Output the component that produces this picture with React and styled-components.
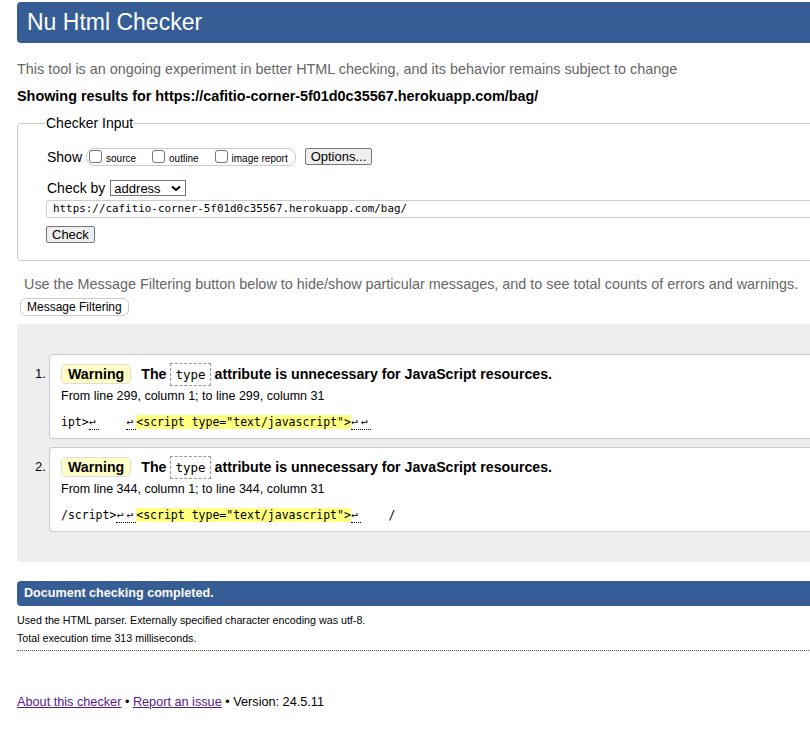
import styled, { createGlobalStyle } from "styled-components";

const Global = createGlobalStyle`
  html, body {
    margin: 0;
    padding: 0;
    overflow: hidden;
    background: #fff;
  }
  body {
    font-family: "Liberation Sans", Arial, sans-serif;
    color: #000;
  }
`;

const Page = styled.div`
  width: 1000px;
  padding: 2px 0 40px 17px;
`;

const Header = styled.h1`
  margin: 0;
  height: 41px;
  line-height: 41px;
  background: #365d95;
  color: #fff;
  border-radius: 4px;
  padding-left: 10px;
  font-size: 23px;
  font-weight: 400;
`;

const Intro = styled.p`
  margin: 18px 0 0;
  font-size: 14.4px;
  line-height: 17px;
  color: #666;
`;

const Showing = styled.p`
  margin: 10px 0 0;
  font-size: 14.4px;
  line-height: 17px;
  font-weight: 700;
`;

const Fieldset = styled.fieldset`
  margin: 10px 0 0;
  border: 1px solid #ccc;
  border-radius: 4px;
  padding: 16px 0 17px 29px;
  height: 146px;
  box-sizing: border-box;
`;

const Legend = styled.legend`
  font-size: 14px;
  padding: 0 1px;
  margin-left: -2px;
`;

const Row = styled.div`
  display: flex;
  align-items: center;
  font-size: 14px;
  margin-top: ${(p) => p.$top || 0}px;
`;

const Pill = styled.span`
  display: inline-flex;
  align-items: center;
  height: 16px;
  border: 1px solid #ccc;
  border-radius: 8px;
  padding: 0 7px 0 2px;
  margin-left: 4px;
  font-size: 10px;
  margin-top: 1px;
`;

const Opt = styled.label`
  display: inline-flex;
  align-items: center;
  margin-right: ${(p) => p.$gap || 0}px;
  padding-top: 2px;
`;

const Box = styled.span`
  display: inline-block;
  width: 11px;
  height: 11px;
  border: 1px solid #767676;
  border-radius: 3px;
  margin-right: 4px;
  margin-top: -4px;
  background: #fff;
`;

const Btn = styled.button`
  font-family: "Liberation Sans", Arial, sans-serif;
  font-size: 13px;
  line-height: 14px;
  background: #efefef;
  border: 1px solid #767676;
  border-radius: 2px;
  padding: 0 5px;
  height: 17px;
  color: #000;
  margin-left: ${(p) => p.$left || 0}px;
`;

const Select = styled.span`
  display: inline-flex;
  align-items: center;
  justify-content: space-between;
  width: 76px;
  height: 16px;
  box-sizing: border-box;
  border: 1px solid #767676;
  margin-left: 5px;
  padding: 0 4px 0 3px;
  font-size: 13px;
`;

const UrlInput = styled.div`
  margin: 4px 0 0 -1px;
  height: 18px;
  box-sizing: border-box;
  border: 1px solid #ccc;
  border-radius: 4px 0 0 4px;
  border-right: none;
  font-family: "DejaVu Sans Mono", monospace;
  font-size: 10.9px;
  line-height: 16px;
  padding-left: 6px;
`;

const Note = styled.p`
  margin: 15px 0 0 7px;
  font-size: 14.4px;
  line-height: 17px;
  color: #666;
`;

const PillBtn = styled.button`
  margin: 5px 0 0 3px;
  font-family: "Liberation Sans", Arial, sans-serif;
  font-size: 12px;
  height: 18px;
  padding: 0 6px;
  background: #fff;
  border: 1px solid #ccc;
  border-radius: 6px;
  color: #000;
`;

const Results = styled.ol`
  margin: 8px 0 0;
  background: #eee;
  border-radius: 4px 0 0 4px;
  padding: 30px 0 30px 32px;
  list-style: none;
  counter-reset: msg;
`;

const Item = styled.li`
  position: relative;
  counter-increment: msg;
  background: #fff;
  border: 1px solid #ccc;
  border-right: none;
  border-radius: 4px 0 0 4px;
  height: 85px;
  box-sizing: border-box;
  padding: 8px 0 0 11px;
  & + & {
    margin-top: 8px;
  }
  &::before {
    content: counter(msg) ".";
    position: absolute;
    left: -15px;
    top: 11px;
    font-size: 13px;
  }
`;

const Title = styled.p`
  margin: 0;
  display: flex;
  align-items: center;
  font-size: 14.2px;
  font-weight: 700;
  height: 22px;
`;

const Badge = styled.span`
  display: inline-block;
  background: #ffffc6;
  border: 1px solid #ddd;
  border-radius: 5px;
  padding: 0 6px;
  height: 18px;
  line-height: 18px;
  margin-right: 10px;
`;

const Code = styled.code`
  display: inline-block;
  font-family: "DejaVu Sans Mono", monospace;
  font-weight: 400;
  font-size: 12.5px;
  border: 1px dashed #999;
  padding: 0 4px;
  height: 21px;
  line-height: 21px;
  margin: 0 4px;
`;

const Location = styled.p`
  margin: 3px 0 0;
  font-size: 12.5px;
  line-height: 16px;
`;

const Extract = styled.pre`
  margin: 10px 0 0;
  font-family: "DejaVu Sans Mono", monospace;
  font-size: 11.5px;
  line-height: 17px;
  white-space: pre;
`;

const Ws = styled.span`
  border-bottom: 1px dotted #000;
  letter-spacing: 3px;
`;

const Mark = styled.mark`
  background: #ffff80;
  color: #000;
`;

const Done = styled.p`
  margin: 19px 0 0;
  height: 25px;
  line-height: 25px;
  background: #365d95;
  color: #fff;
  font-weight: 700;
  font-size: 12.6px;
  padding-left: 7px;
  border-radius: 4px 0 0 4px;
`;

const Details = styled.div`
  margin-top: 5px;
  font-size: 10.7px;
  line-height: 18px;
  border-bottom: 1px dotted #666;
  padding-bottom: 3px;
`;

const Footer = styled.p`
  margin: 43px 0 0;
  font-size: 12.7px;
  line-height: 17px;
  a {
    color: #551a8b;
    text-decoration: underline;
  }
`;

// parts: [kind, text] — "t" plain, "w" marked whitespace, "m" highlighted source
function Message({ line, parts }) {
  return (
    <Item>
      <Title>
        <Badge>Warning</Badge>
        The<Code>type</Code>attribute is unnecessary for JavaScript resources.
      </Title>
      <Location>
        From line {line}, column 1; to line {line}, column 31
      </Location>
      <Extract>
        {parts.map(([kind, text], i) =>
          kind === "w" ? (
            <Ws key={i}>{text}</Ws>
          ) : kind === "m" ? (
            <Mark key={i}>{text}</Mark>
          ) : (
            <span key={i}>{text}</span>
          )
        )}
      </Extract>
    </Item>
  );
}

const tag = '<script type="text/javascript">';

export default function App() {
  return (
    <Page>
      <Global />
      <Header>Nu Html Checker</Header>
      <Intro>
        This tool is an ongoing experiment in better HTML checking, and its
        behavior remains subject to change
      </Intro>
      <Showing>
        Showing results for https://cafitio-corner-5f01d0c35567.herokuapp.com/bag/
      </Showing>
      <Fieldset>
        <Legend>Checker Input</Legend>
        <Row>
          Show
          <Pill>
            <Opt $gap={16}>
              <Box />
              source
            </Opt>
            <Opt $gap={16}>
              <Box />
              outline
            </Opt>
            <Opt>
              <Box />
              image report
            </Opt>
          </Pill>
          <Btn $left={9}>Options...</Btn>
        </Row>
        <Row $top={14}>
          Check by
          <Select>
            address
            <svg width="10" height="7" viewBox="0 0 10 7">
              <path d="M1 1.5 L5 5 L9 1.5" stroke="#000" strokeWidth="2" fill="none" />
            </svg>
          </Select>
        </Row>
        <UrlInput>https://cafitio-corner-5f01d0c35567.herokuapp.com/bag/</UrlInput>
        <Row $top={8}>
          <Btn $left={-1}>Check</Btn>
        </Row>
      </Fieldset>
      <Note>
        Use the Message Filtering button below to hide/show particular messages,
        and to see total counts of errors and warnings.
      </Note>
      <PillBtn>Message Filtering</PillBtn>
      <Results>
        <Message
          line={299}
          parts={[
            ["t", "ipt>"],
            ["w", "↩"],
            ["t", "    "],
            ["w", "↩"],
            ["m", tag],
            ["w", "↩↩"],
          ]}
        />
        <Message
          line={344}
          parts={[
            ["t", "/script>"],
            ["w", "↩↩"],
            ["m", tag],
            ["w", "↩"],
            ["t", "    /"],
          ]}
        />
      </Results>
      <Done>Document checking completed.</Done>
      <Details>
        <div>Used the HTML parser. Externally specified character encoding was utf-8.</div>
        <div>Total execution time 313 milliseconds.</div>
      </Details>
      <Footer>
        <a href="#about">About this checker</a> • <a href="#report">Report an issue</a> •
        Version: 24.5.11
      </Footer>
    </Page>
  );
}
